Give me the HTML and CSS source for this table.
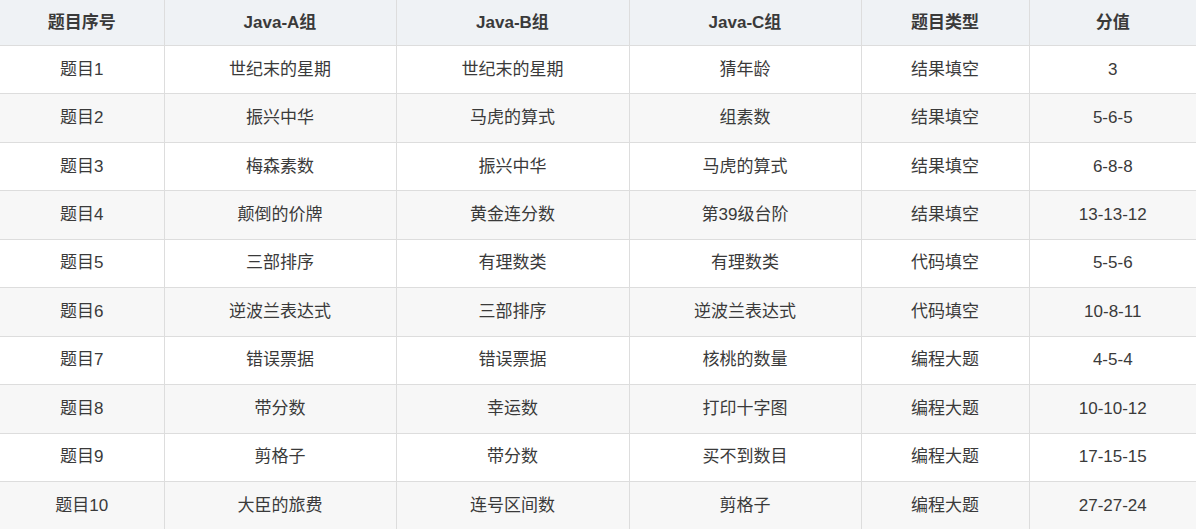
FILE: index.html
```html
<!DOCTYPE html>
<html lang="zh-CN">
<head>
<meta charset="utf-8">
<title>题目</title>
<link rel="stylesheet" href="styles.css">
</head>
<body>
<table class="score-table">
  <colgroup>
    <col class="c1"><col class="c2"><col class="c3"><col class="c4"><col class="c5"><col class="c6">
  </colgroup>
  <thead>
    <tr><th>题目序号</th><th>Java-A组</th><th>Java-B组</th><th>Java-C组</th><th>题目类型</th><th>分值</th></tr>
  </thead>
  <tbody>
    <tr><td>题目1</td><td>世纪末的星期</td><td>世纪末的星期</td><td>猜年龄</td><td>结果填空</td><td>3</td></tr>
    <tr><td>题目2</td><td>振兴中华</td><td>马虎的算式</td><td>组素数</td><td>结果填空</td><td>5-6-5</td></tr>
    <tr><td>题目3</td><td>梅森素数</td><td>振兴中华</td><td>马虎的算式</td><td>结果填空</td><td>6-8-8</td></tr>
    <tr><td>题目4</td><td>颠倒的价牌</td><td>黄金连分数</td><td>第39级台阶</td><td>结果填空</td><td>13-13-12</td></tr>
    <tr><td>题目5</td><td>三部排序</td><td>有理数类</td><td>有理数类</td><td>代码填空</td><td>5-5-6</td></tr>
    <tr><td>题目6</td><td>逆波兰表达式</td><td>三部排序</td><td>逆波兰表达式</td><td>代码填空</td><td>10-8-11</td></tr>
    <tr><td>题目7</td><td>错误票据</td><td>错误票据</td><td>核桃的数量</td><td>编程大题</td><td>4-5-4</td></tr>
    <tr><td>题目8</td><td>带分数</td><td>幸运数</td><td>打印十字图</td><td>编程大题</td><td>10-10-12</td></tr>
    <tr><td>题目9</td><td>剪格子</td><td>带分数</td><td>买不到数目</td><td>编程大题</td><td>17-15-15</td></tr>
    <tr><td>题目10</td><td>大臣的旅费</td><td>连号区间数</td><td>剪格子</td><td>编程大题</td><td>27-27-24</td></tr>
  </tbody>
</table>
</body>
</html>
```
FILE: styles.css
```css
html, body {
  margin: 0;
  padding: 0;
  background: #ffffff;
}
body {
  font-family: "Liberation Sans", "Noto Sans CJK SC", sans-serif;
  font-size: 17px;
  color: #3a3a3a;
  overflow: hidden;
}
.score-table {
  width: 1196px;
  border-collapse: collapse;
  table-layout: fixed;
}
.c1 { width: 164px; }
.c2 { width: 232px; }
.c3 { width: 233px; }
.c4 { width: 232px; }
.c5 { width: 168px; }
.c6 { width: 167px; }
.score-table th,
.score-table td {
  border: 1px solid #dddddd;
  text-align: center;
  vertical-align: middle;
  padding: 0 8px;
  line-height: 24px;
}
.score-table th {
  height: 45px;
  background: #eff2f5;
  font-weight: bold;
  border-top: none;
}
.score-table td {
  height: 47.45px;
}
.score-table th:first-child,
.score-table td:first-child { border-left: none; }
.score-table th:last-child,
.score-table td:last-child { border-right: none; }
.score-table tbody tr:nth-child(even) td {
  background: #f7f7f7;
}
```
